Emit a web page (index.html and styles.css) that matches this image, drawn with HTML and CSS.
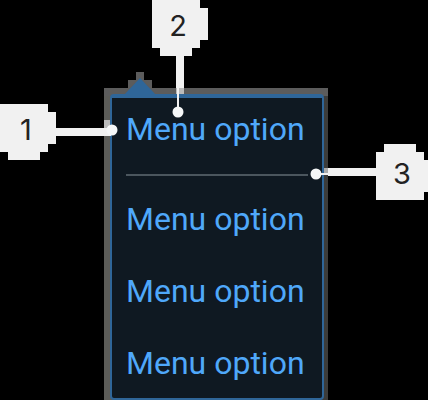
FILE: index.html
```html
<!DOCTYPE html>
<html lang="en">
<head>
<meta charset="utf-8">
<meta name="viewport" content="width=device-width, initial-scale=1">
<title>Menu anatomy</title>
<link rel="stylesheet" href="styles.css">
</head>
<body>
<main class="anatomy">
  <div class="frame">
    <svg class="arrow" width="24" height="22" viewBox="0 0 24 22" aria-hidden="true">
      <path fill="#5c5c5c" d="M0 8H8V0H16V8H24V22H0Z"/>
    </svg>
    <svg class="arrow-tip" width="32" height="17" viewBox="0 0 32 17" aria-hidden="true">
      <path fill="#2f6699" d="M0 17L16 0L32 17Z"/>
    </svg>
    <nav class="menu" aria-label="Menu">
      <a class="option" href="#">Menu option</a>
      <hr class="divider">
      <a class="option" href="#">Menu option</a>
      <a class="option" href="#">Menu option</a>
      <a class="option" href="#">Menu option</a>
    </nav>
  </div>

  <div class="callout callout-container">
    <svg width="118" height="56" viewBox="0 0 118 56" aria-hidden="true">
      <path fill="#bbb" d="M104 16H110V24H104Z"/>
      <path fill="#f1f1f1" d="M0 0H48V8H56V24H111V32H56V40H48V48H40V56H8V48H0Z"/>
      <circle cx="112" cy="26" r="5.5" fill="#f5f7f8"/>
    </svg>
    <span class="number">1</span>
  </div>

  <div class="callout callout-label">
    <svg width="56" height="118" viewBox="0 0 56 118" aria-hidden="true">
      <path fill="#bbb" d="M24 88H32V94H24Z"/>
      <path fill="#f1f1f1" d="M0 0H48V8H56V40H48V48H40V56H32V88H27V112H25V88H24V56H8V48H0Z"/>
      <circle cx="26" cy="112" r="5.5" fill="#f5f7f8"/>
    </svg>
    <span class="number">2</span>
  </div>

  <div class="callout callout-divider">
    <svg width="118" height="56" viewBox="0 0 118 56" aria-hidden="true">
      <path fill="#aaa" d="M14 24H18V29H14Z"/>
      <path fill="#f1f1f1" d="M66 8H74V0H106V8H114V16H118V48H114V56H66V32H18V31H6V29H18V24H66Z"/>
      <circle cx="6" cy="30" r="5.5" fill="#f5f7f8"/>
    </svg>
    <span class="number">3</span>
  </div>
</main>
</body>
</html>
```
FILE: styles.css
```css
* {
  box-sizing: border-box;
}

body {
  margin: 0;
  background: #000;
}

.anatomy {
  position: relative;
  padding: 88px 100px 0 104px;
}

.frame {
  position: relative;
  padding: 6px 4px 0 6px;
  background:
    linear-gradient(#5c5c5c, #5c5c5c) top / 100% 8px no-repeat,
    linear-gradient(to right, #5c5c58 50%, #3c3c3a 50%);
}

.arrow,
.arrow-tip {
  position: absolute;
  display: block;
}

.arrow {
  top: -16px;
  left: 24px;
}

.arrow-tip {
  top: -10px;
  left: 20px;
}

.menu {
  position: relative;
  display: flex;
  flex-direction: column;
  gap: 32px;
  padding: 11px 14px 15px;
  border: 2px solid #2f6699;
  border-top-width: 4px;
  border-radius: 4px;
  background: #0f1922;
}

.option {
  color: #4fa8fa;
  font: 400 32px/40px Roboto, sans-serif;
  text-decoration: none;
  white-space: nowrap;
}

.divider {
  width: 100%;
  height: 2px;
  margin: -7px 0 -9px;
  border: 0;
  background: #4b565e;
}

.callout {
  position: absolute;
}

.callout svg {
  display: block;
}

.callout-container {
  top: 104px;
  left: 0;
}

.callout-label {
  top: 0;
  left: 152px;
}

.callout-divider {
  top: 144px;
  right: 0;
}

.number {
  position: absolute;
  top: 0;
  left: 0;
  width: 52px;
  color: #222;
  font: 400 29px/52px Inter, "Liberation Sans", sans-serif;
  text-align: center;
}

.callout-divider .number {
  top: 4px;
  right: 0;
  left: auto;
}
```
